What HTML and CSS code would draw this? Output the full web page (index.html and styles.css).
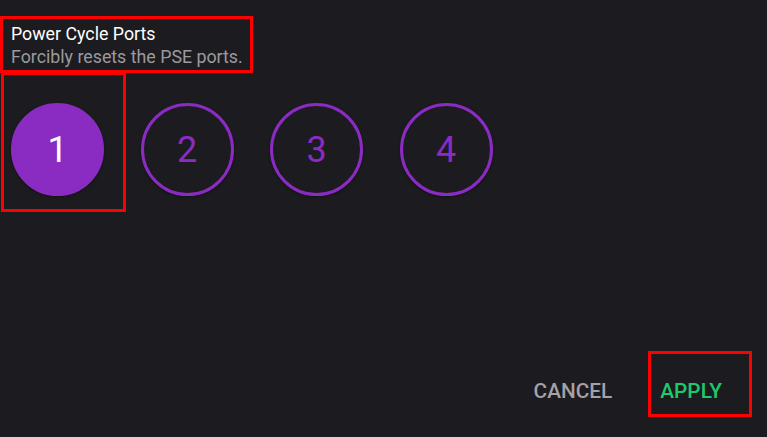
FILE: index.html
```html
<!DOCTYPE html>
<html>
<head>
<meta charset="utf-8">
<link rel="stylesheet" href="styles.css">
</head>
<body>
<div class="dialog">
  <header class="head">
    <div class="title">Power Cycle Ports</div>
    <div class="sub">Forcibly resets the PSE ports.</div>
  </header>
  <div class="ports">
    <button class="port on">1</button>
    <button class="port">2</button>
    <button class="port">3</button>
    <button class="port">4</button>
  </div>
  <div class="actions">
    <button class="btn cancel">CANCEL</button>
    <button class="btn apply">APPLY</button>
  </div>
</div>
<div class="marks">
  <div class="mark m-head"></div>
  <div class="mark m-port"></div>
  <div class="mark m-apply"></div>
</div>
</body>
</html>
```
FILE: styles.css
```css
html, body {
  margin: 0;
  padding: 0;
  background: #1c1b1f;
  width: 767px;
  height: 437px;
  overflow: hidden;
  font-family: Roboto, "Liberation Sans", sans-serif;
}
.dialog {
  display: flex;
  flex-direction: column;
  height: 437px;
  box-sizing: border-box;
  padding: 22px 0 0 11px;
}
.title {
  color: #ffffff;
  font-size: 17.8px;
  line-height: 23px;
}
.sub {
  color: #9b9a9f;
  font-size: 17.8px;
  line-height: 23px;
}
.ports {
  display: flex;
  gap: 36.5px;
  margin-top: 35px;
}
.port {
  width: 93px;
  height: 93px;
  border-radius: 50%;
  border: 3px solid #8a2bc2;
  background: transparent;
  color: #8a2bc2;
  font-family: Roboto, "Liberation Sans", sans-serif;
  font-size: 36px;
  padding: 0;
  box-sizing: border-box;
  box-shadow: 0 1px 3px rgba(0,0,0,0.4);
}
.port.on {
  background: #8a2bc2;
  color: #ffffff;
}
.actions {
  margin-top: auto;
  display: flex;
  justify-content: flex-end;
  gap: 48px;
  padding: 0 45px 34px 0;
}
.btn {
  background: transparent;
  border: none;
  padding: 0;
  font-family: Roboto, "Liberation Sans", sans-serif;
  font-weight: 500;
  font-size: 20.8px;
  line-height: 24px;
}
.cancel { color: #a3a2a7; }
.apply { color: #1dca6a; }
.marks .mark {
  position: absolute;
  border: 3px solid #ff0000;
  box-sizing: border-box;
}
.m-head { left: 0; top: 16px; width: 253px; height: 57px; }
.m-port { left: 1px; top: 72px; width: 125px; height: 140px; }
.m-apply { left: 648px; top: 351px; width: 104px; height: 66px; }
```
